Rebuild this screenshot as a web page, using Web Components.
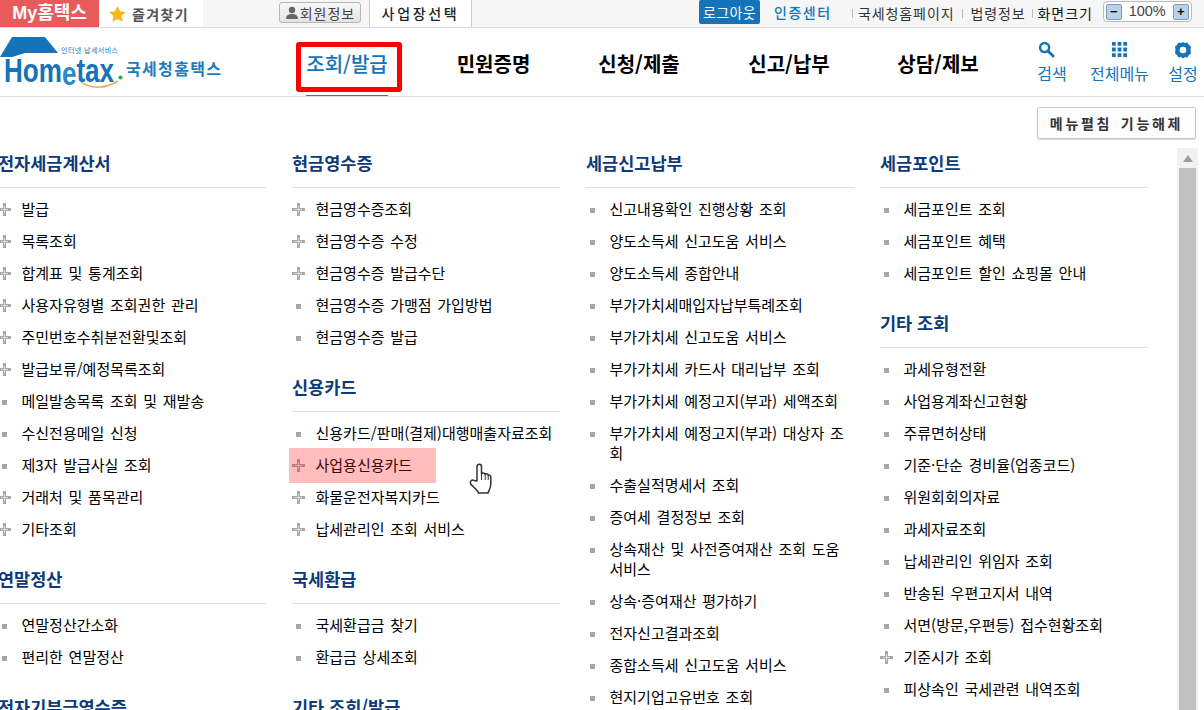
<!DOCTYPE html>
<html lang="ko">
<head>
<meta charset="utf-8">
<title>Hometax</title>
<style>
  html, body { margin: 0; height: 710px; overflow: hidden; background: #fff; }
  body { font-family: "Noto Sans CJK KR", "Noto Sans", sans-serif; color: #000; position: relative; }
</style>
</head>
<body>
<hts-topbar></hts-topbar>
<hts-header></hts-header>
<hts-main>
  <hts-column>
    <hts-section title="전자세금계산서">
      <hts-item plus>발급</hts-item>
      <hts-item plus>목록조회</hts-item>
      <hts-item plus>합계표 및 통계조회</hts-item>
      <hts-item plus>사용자유형별 조회권한 관리</hts-item>
      <hts-item plus>주민번호수취분전환및조회</hts-item>
      <hts-item plus>발급보류/예정목록조회</hts-item>
      <hts-item>메일발송목록 조회 및 재발송</hts-item>
      <hts-item>수신전용메일 신청</hts-item>
      <hts-item>제3자 발급사실 조회</hts-item>
      <hts-item plus>거래처 및 품목관리</hts-item>
      <hts-item plus>기타조회</hts-item>
    </hts-section>
    <hts-section title="연말정산">
      <hts-item>연말정산간소화</hts-item>
      <hts-item>편리한 연말정산</hts-item>
    </hts-section>
    <hts-section title="전자기부금영수증"></hts-section>
  </hts-column>
  <hts-column>
    <hts-section title="현금영수증">
      <hts-item plus>현금영수증조회</hts-item>
      <hts-item plus>현금영수증 수정</hts-item>
      <hts-item plus>현금영수증 발급수단</hts-item>
      <hts-item>현금영수증 가맹점 가입방법</hts-item>
      <hts-item>현금영수증 발급</hts-item>
    </hts-section>
    <hts-section title="신용카드">
      <hts-item>신용카드/판매(결제)대행매출자료조회</hts-item>
      <hts-item plus active>사업용신용카드</hts-item>
      <hts-item plus>화물운전자복지카드</hts-item>
      <hts-item plus>납세관리인 조회 서비스</hts-item>
    </hts-section>
    <hts-section title="국세환급">
      <hts-item>국세환급금 찾기</hts-item>
      <hts-item>환급금 상세조회</hts-item>
    </hts-section>
    <hts-section title="기타 조회/발급"></hts-section>
  </hts-column>
  <hts-column>
    <hts-section title="세금신고납부">
      <hts-item>신고내용확인 진행상황 조회</hts-item>
      <hts-item>양도소득세 신고도움 서비스</hts-item>
      <hts-item>양도소득세 종합안내</hts-item>
      <hts-item>부가가치세매입자납부특례조회</hts-item>
      <hts-item>부가가치세 신고도움 서비스</hts-item>
      <hts-item>부가가치세 카드사 대리납부 조회</hts-item>
      <hts-item>부가가치세 예정고지(부과) 세액조회</hts-item>
      <hts-item>부가가치세 예정고지(부과) 대상자 조회</hts-item>
      <hts-item>수출실적명세서 조회</hts-item>
      <hts-item>증여세 결정정보 조회</hts-item>
      <hts-item>상속재산 및 사전증여재산 조회 도움 서비스</hts-item>
      <hts-item>상속·증여재산 평가하기</hts-item>
      <hts-item>전자신고결과조회</hts-item>
      <hts-item>종합소득세 신고도움 서비스</hts-item>
      <hts-item>현지기업고유번호 조회</hts-item>
    </hts-section>
  </hts-column>
  <hts-column>
    <hts-section title="세금포인트">
      <hts-item>세금포인트 조회</hts-item>
      <hts-item>세금포인트 혜택</hts-item>
      <hts-item>세금포인트 할인 쇼핑몰 안내</hts-item>
    </hts-section>
    <hts-section title="기타 조회">
      <hts-item>과세유형전환</hts-item>
      <hts-item>사업용계좌신고현황</hts-item>
      <hts-item>주류면허상태</hts-item>
      <hts-item>기준·단순 경비율(업종코드)</hts-item>
      <hts-item>위원회회의자료</hts-item>
      <hts-item>과세자료조회</hts-item>
      <hts-item>납세관리인 위임자 조회</hts-item>
      <hts-item>반송된 우편고지서 내역</hts-item>
      <hts-item>서면(방문,우편등) 접수현황조회</hts-item>
      <hts-item plus>기준시가 조회</hts-item>
      <hts-item>피상속인 국세관련 내역조회</hts-item>
    </hts-section>
  </hts-column>
</hts-main>
<hts-cursor></hts-cursor>

<script>
// Top utility bar
customElements.define('hts-topbar', class extends HTMLElement {
  constructor () {
    super()
    this.attachShadow({ mode: 'open' }).innerHTML = `
      <style>
        :host { display: flex; height: 27px; background: #f6f6f6; border-bottom: 1px solid #dcdcdc; font-size: 14px; line-height: 20px; color: #333; white-space: nowrap; }
        .my { width: 99px; background: #e85b5c; color: #fff; font: bold 18px/26px "Liberation Sans", "Noto Sans CJK KR", sans-serif; text-align: center; }
        .fav { width: 104px; background: #fff; display: flex; align-items: center; font-weight: 700; color: #555; letter-spacing: 1.4px; }
        .fav svg { margin: 0 6px 0 10px; }
        .member { margin-left: 76px; width: 80px; height: 19px; margin-top: 2px; border: 1px solid #b5b5b5; border-radius: 3px; background: linear-gradient(#f8f8f8, #e4e4e4); display: flex; align-items: center; justify-content: center; color: #444; letter-spacing: 1px; }
        .member svg { margin-right: 1px; }
        .biz { margin-left: 8px; width: 103px; height: 27px; box-sizing: border-box; border: 1px solid #ccc; border-width: 0 1px 0 1px; background: #fff; line-height: 26px; text-align: center; font-weight: 500; letter-spacing: 2.700px; color: #222; }
        .logout { margin-left: 227px; width: 61px; height: 24px; background: #1473b9; color: #fff; line-height: 24px; text-align: center; border-radius: 2px; letter-spacing: .4px; }
        .cert { margin-left: 14px; width: 78px; line-height: 25px; color: #1473b9; font-weight: 500; letter-spacing: 1.500px; }
        .links { display: flex; align-items: center; height: 26px; letter-spacing: .9px; }
        .links i { width: 1px; height: 9px; background: #bbb; }
        .links span:nth-child(2) { margin: 0 8px 0 5px; }
        .links span:nth-child(4) { margin: 0 6px 0 7px; }
        .links span:nth-child(6) { margin: 0 0 0 5px; color: #111; }
        .zoom { margin-left: 10px; margin-top: 1px; width: 83px; height: 19px; border: 1px solid #bbb; border-radius: 4px; background: #fff; display: flex; align-items: center; justify-content: space-between; padding: 0 2px; font: 14.500px/19px "Liberation Sans", sans-serif; color: #444; }
        .zoom b { width: 14px; height: 14px; border: 1px solid #7d9dbb; border-radius: 2px; background: #b7d2ea; display: flex; align-items: center; justify-content: center; font: bold 13px/14px "Liberation Sans", sans-serif; color: #111; }
      </style>
      <div class="my">My홈택스</div>
      <div class="fav">
        <svg width="17" height="16" viewBox="0 0 17 16"><path d="M8.500 0l2.500 5.300 5.800.7-4.300 4 1.200 5.800-5.200-2.900-5.200 2.900 1.200-5.800L.2 6 6 5.300z" fill="#f5b91d"/></svg>즐겨찾기
      </div>
      <div class="member">
        <svg width="14" height="14" viewBox="0 0 14 14"><circle cx="7" cy="4" r="3.200" fill="#666"/><path d="M1 13c0-3.600 2.400-5 6-5s6 1.400 6 5z" fill="#666"/></svg>회원정보
      </div>
      <div class="biz">사업장선택</div>
      <div class="logout">로그아웃</div>
      <div class="cert">인증센터</div>
      <div class="links"><i></i><span>국세청홈페이지</span><i></i><span>법령정보</span><i></i><span>화면크기</span></div>
      <div class="zoom"><b>−</b>100%<b>+</b></div>
    `
  }
})

// Logo + main navigation + right side icons
customElements.define('hts-header', class extends HTMLElement {
  constructor () {
    super()
    this.attachShadow({ mode: 'open' }).innerHTML = `
      <style>
        :host { display: flex; height: 68px; border-bottom: 1px solid #dedede; position: relative; white-space: nowrap; }
        .logo { width: 296px; flex: none; }
        nav { display: flex; flex: none; width: 719px; }
        nav a { height: 68px; box-sizing: border-box; padding-top: 21px; text-align: center; font-size: 20px; line-height: 30px; font-weight: 700; color: #000; position: relative; }
        nav a:first-child { width: 102px; color: #1473b9; font-weight: 500; }
        nav a:first-child::before { content: ""; position: absolute; left: 0; top: 14px; width: 106px; height: 50px; box-sizing: border-box; border: 5px solid #f00; border-radius: 3px; }
        nav a:first-child::after { content: ""; position: absolute; left: 10px; bottom: 0; width: 82px; height: 1px; background: #4a6fae; }
        nav a:nth-child(2) { width: 190px; padding-left: 1px; }
        nav a:nth-child(3) { width: 102px; }
        nav a:nth-child(4) { width: 198px; }
        nav a:nth-child(5) { width: 100px; }
        .tools { display: flex; flex: 1; font-size: 16px; line-height: 20px; color: #1473b9; }
        .tools div { display: flex; flex-direction: column; align-items: center; padding-top: 13px; flex: none; }
        .tools svg { height: 17px; margin-bottom: 5px; }
      </style>
      <svg class="logo" height="68" viewBox="0 0 296 68">
        <path d="M0 29L12 9H45L58 25H25L12 29Z" fill="#1473b9"/>
        <text x="61" y="25" font-size="7" fill="#1473b9" textLength="57" font-family="Noto Sans CJK KR">인터넷 납세서비스</text>
        <text transform="translate(4 54) scale(.79 1)" font-size="33" font-weight="700" fill="#1473b9" font-family="Liberation Sans">Hom<tspan dy="3" fill="#2a8acb">e</tspan><tspan dy="-3">tax</tspan></text>
        <circle cx="120.500" cy="49.500" r="2" fill="#2ea84a"/>
        <path d="M81 54c10 7 24 7 37-1" fill="none" stroke="#eda545" stroke-width="1.500"/>
        <text x="126" y="47" font-size="16" font-weight="700" fill="#1a7cc0" font-family="Noto Sans CJK KR" textLength="95">국세청홈택스</text>
      </svg>
      <nav><a>조회/발급</a><a>민원증명</a><a>신청/제출</a><a>신고/납부</a><a>상담/제보</a></nav>
      <div class="tools">
        <div style="margin-left:22px;width:30px">
          <svg width="17" viewBox="0 0 18 18" style="margin-right:11px"><circle cx="7" cy="7" r="4.800" fill="none" stroke="#1473b9" stroke-width="2.600"/><path d="M10.500 10.500L16 16" stroke="#1473b9" stroke-width="3" stroke-linecap="round"/></svg>
          검색
        </div>
        <div style="margin-left:22.500px;width:60px">
          <svg width="17" viewBox="0 0 18 18" fill="#1473b9"><path d="M1 1h4v4H1zM7 1h4v4H7zM13 1h4v4h-4zM1 7h4v4H1zM7 7h4v4H7zM13 7h4v4h-4zM1 13h4v4H1zM7 13h4v4H7zM13 13h4v4h-4z"/></svg>
          전체메뉴
        </div>
        <div style="margin-left:18.500px;width:30px">
          <svg width="18" viewBox="0 0 18 18" style="height:18px;margin-bottom:4px"><path d="M9 1l2 1 2.500-.5 1.500 2.500 2 1.500L16.500 9l.5 3.500-2 1.500-1.500 2.500L11 16l-2 1.500L7 16l-2.500.5L3 14l-2-1.500L1.500 9 1 5.500 3 4l1.500-2.500L7 2z" fill="#1473b9"/><circle cx="9" cy="9" r="3.300" fill="#fff"/></svg>
          설정
        </div>
      </div>
    `
  }
})

// Button row, column grid and the scrollbar
customElements.define('hts-main', class extends HTMLElement {
  constructor () {
    super()
    this.attachShadow({ mode: 'open' }).innerHTML = `
      <style>
        :host { display: block; }
        .actions { display: flex; justify-content: flex-end; height: 41px; padding: 10px 8px 0 0; }
        button { width: 159px; height: 32px; padding: 0; background: #fdfdfd; border: 1px solid #c8c8c8; border-radius: 2px; box-shadow: 0 1px 1px #ddd; font: 700 14px/28px "Noto Sans CJK KR", sans-serif; letter-spacing: 2.700px; word-spacing: 2px; color: #333; }
        .body { display: flex; height: 562px; overflow: hidden; }
        .grid { flex: none; width: 1179px; margin-left: -2px; padding-top: 3px; display: grid; grid-template-columns: repeat(4, 268px); column-gap: 26px; align-content: start; }
        .bar { flex: none; width: 21px; background: #f1f1f1; display: flex; flex-direction: column; align-items: center; }
        .bar i { margin: 7px 0 6px; width: 0; height: 0; border: 5px solid transparent; border-top: 0; border-bottom: 7px solid #9d9d9d; }
        .bar b { width: 17px; flex: 1; background: #c1c1c1; }
      </style>
      <div class="actions"><button>메뉴펼침 기능해제</button></div>
      <div class="body">
        <div class="grid"><slot></slot></div>
        <div class="bar"><i></i><b></b></div>
      </div>
    `
  }
})

customElements.define('hts-column', class extends HTMLElement {
  constructor () {
    super()
    this.attachShadow({ mode: 'open' }).innerHTML = `
      <style>:host { display: block; min-width: 0; }</style>
      <slot></slot>
    `
  }
})

// A titled group of menu items
customElements.define('hts-section', class extends HTMLElement {
  constructor () {
    super()
    this.attachShadow({ mode: 'open' }).innerHTML = `
      <style>
        :host { display: block; margin-bottom: 21px; }
        h3 { margin: 0 0 6px; padding-bottom: 12px; border-bottom: 1px solid #dedede; font-size: 17.500px; line-height: 24px; font-weight: 700; color: #0d3a78; white-space: nowrap; }
      </style>
      <h3></h3>
      <slot></slot>
    `
    this.shadowRoot.querySelector('h3').textContent = this.getAttribute('title')
    this.removeAttribute('title')
  }
})

// One menu row: grey plus when it unfolds, small square when it doesn't
customElements.define('hts-item', class extends HTMLElement {
  constructor () {
    super()
    const mark = this.hasAttribute('plus')
      ? '<svg class="m" width="13" height="13" viewBox="0 0 13 13"><path d="M5 0h3v5h5v3H8v5H5V8H0V5h5z" fill="#a8a8a8"/><path d="M6 3h1v3h3v1H7v3H6V7H3V6h3z" fill="#dcdcdc"/></svg>'
      : '<i class="m"></i>'
    this.attachShadow({ mode: 'open' }).innerHTML = `
      <style>
        :host { display: block; position: relative; font-size: 15px; line-height: 20px; word-spacing: 1.500px; color: #000; }
        .row { display: flex; padding: 5px 0 7px; }
        .m { flex: none; }
        svg.m { margin: 4px 0 0 0; width: 13px; height: 13px; }
        i.m { width: 5px; height: 5px; background: #a6a6a6; margin: 9px 4px 0 4px; }
        .t { margin-left: 10.500px; min-width: 0; }
        .hl { position: absolute; left: -3px; top: -2px; width: 147px; height: 35px; background: rgba(255, 0, 0, .26); }
      </style>
      <div class="row">${mark}<div class="t"><slot></slot></div></div>
      ${this.hasAttribute('active') ? '<div class="hl"></div>' : ''}
    `
  }
})

// The mouse pointer caught in the shot
customElements.define('hts-cursor', class extends HTMLElement {
  constructor () {
    super()
    this.attachShadow({ mode: 'open' }).innerHTML = `
      <style>:host { position: absolute; left: 469px; top: 463px; width: 23px; height: 32px; }</style>
      <svg width="23" height="32" viewBox="0 0 23 32">
        <path d="M8 18V3.500C8 .5 12.500 .5 12.500 3.500V11C13.500 9.500 16 9.800 16.200 11.500C17 10.300 19 10.600 19.200 12.500C20 11.500 21.800 12 21.800 14V21C21.800 25 20 27 19 30H9.500C8.500 27 3.500 23.500 1.800 21C.3 18.500 3 16 5 17.500z" fill="#fff" stroke="#333" stroke-width="1.500" stroke-linejoin="round"/>
        <path d="M12.500 11v6M16.200 11.500V17M19.200 12.500V17" stroke="#333" stroke-width="1"/>
      </svg>
    `
  }
})
</script>
</body>
</html>
